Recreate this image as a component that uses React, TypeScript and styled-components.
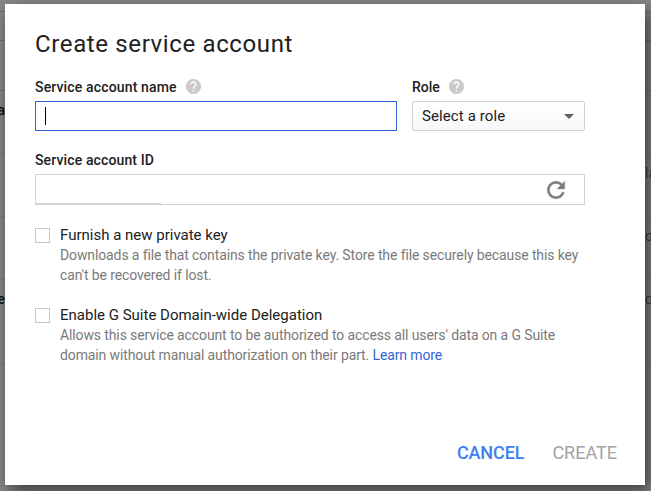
import React from "react";
import styled, { createGlobalStyle } from "styled-components";

const GlobalStyle = createGlobalStyle`
  * { box-sizing: border-box; }
  html, body { margin: 0; height: 100%; overflow: hidden; }
  body { font-family: Roboto, "Liberation Sans", sans-serif; color: #212121; background: #888; }
  h1, p { margin: 0; font-weight: 400; }
`;

const Screen = styled.div`
  position: relative;
  height: 491px;
  overflow: hidden;
`;

const Backdrop = styled.div`
  display: flex;
  flex-direction: column;
  height: 491px;
  background: #888;
`;

const BackRow = styled.div<{ $height: number; $strong?: boolean }>`
  display: flex;
  justify-content: space-between;
  align-items: flex-start;
  flex: none;
  height: ${(p) => p.$height}px;
  padding-top: ${(p) => (p.$height > 40 ? 11 : 0)}px;
  border-bottom: 1px solid ${(p) => (p.$strong ? "#717171" : "#7c7c7c")};
  font-size: 14px;
  line-height: 16px;
`;

const StartCell = styled.span`
  display: flex;
  justify-content: flex-end;
  width: 5px;
  font-weight: 500;
  color: #111;
`;

const EndCell = styled.span`
  width: 6px;
  overflow: hidden;
  white-space: nowrap;
  color: #444;
`;

const Dialog = styled.section`
  position: absolute;
  top: 4px;
  left: 5px;
  width: 640px;
  height: 481px;
  padding: 24px 23px 17px 30px;
  display: flex;
  flex-direction: column;
  background: #fff;
  box-shadow: 4px 6px 16px rgba(0, 0, 0, 0.6);
`;

const Title = styled.h1`
  font-size: 24px;
  line-height: 32px;
  letter-spacing: 0.63px;
`;

const Form = styled.div`
  display: flex;
  flex-direction: column;
  width: 550px;
  padding-top: 17px;
`;

const FieldRow = styled.div`
  display: grid;
  grid-template-columns: 362px 173px;
  column-gap: 15px;
  margin-bottom: 19px;
`;

const Field = styled.div`
  display: flex;
  flex-direction: column;
`;

const Label = styled.label<{ $spacing?: number }>`
  display: flex;
  align-items: center;
  gap: 9px;
  height: 20px;
  margin-bottom: 4px;
  font-size: 14px;
  font-weight: 500;
  letter-spacing: ${(p) => p.$spacing ?? 0}px;

  svg {
    margin-bottom: 2px;
  }
`;

const NameInput = styled.div`
  display: flex;
  align-items: center;
  height: 30px;
  padding-left: 9px;
  border: 1px solid #3367d6;
`;

const Caret = styled.span`
  width: 1px;
  height: 18px;
  background: #000;
`;

const Select = styled.div`
  display: flex;
  align-items: center;
  justify-content: space-between;
  height: 30px;
  padding: 0 10px 0 9px;
  border: 1px solid #d1d1d1;
  border-radius: 2px;
  background: linear-gradient(#fff, #f8f8f8);
  font-size: 15px;
  letter-spacing: 0.1px;
`;

const IdInput = styled.div`
  display: flex;
  align-items: center;
  justify-content: flex-end;
  height: 31px;
  padding-right: 15px;
  border: 1px solid #d1d1d1;
  background: linear-gradient(#d1d1d1, #d1d1d1) 0 100% / 125px 1px no-repeat;
`;

const Option = styled.div`
  display: grid;
  grid-template-columns: 15px 1fr;
  column-gap: 10px;
`;

const Options = styled.div`
  display: flex;
  flex-direction: column;
  gap: 20px;
  padding-top: 20px;
`;

const Checkbox = styled.span`
  width: 15px;
  height: 15px;
  margin-top: 3px;
  border: 1px solid #c6c6c6;
`;

const OptionTitle = styled.p`
  font-size: 15px;
  line-height: 20px;
`;

const OptionText = styled.p`
  font-size: 14px;
  line-height: 20px;
  color: #7a7a7a;
  white-space: nowrap;
  letter-spacing: -0.118px;
`;

const Link = styled.a`
  color: #3367d6;
`;

const Actions = styled.div`
  display: flex;
  justify-content: flex-end;
  gap: 28px;
  margin-top: auto;
  padding-right: 5px;
`;

const ActionButton = styled.button<{ $primary?: boolean }>`
  padding: 0;
  border: 0;
  background: none;
  font: ${(p) => (p.$primary ? 500 : 400)} 18px/30px Roboto, sans-serif;
  letter-spacing: ${(p) => (p.$primary ? -0.1 : 0)}px;
  color: ${(p) => (p.$primary ? "#4080ee" : "#a3a3a3")};
`;

const HelpIcon = () => (
  <svg width="15" height="15" viewBox="2 2 20 20">
    <path
      fill="#cacaca"
      d="M12 2C6.480 2 2 6.480 2 12s4.480 10 10 10 10-4.480 10-10S17.520 2 12 2zm1 17h-2v-2h2v2zm2.070-7.750l-.9.920C13.450 12.900 13 13.500 13 15h-2v-.5c0-1.100.450-2.100 1.170-2.830l1.240-1.260c.370-.360.590-.860.590-1.410 0-1.100-.9-2-2-2s-2 .9-2 2H8c0-2.210 1.790-4 4-4s4 1.790 4 4c0 .880-.360 1.680-.930 2.250z"
    />
  </svg>
);

const ArrowIcon = () => (
  <svg width="10" height="5" viewBox="0 0 10 5">
    <path d="M0 0h10L5 5z" fill="#5f5f5f" />
  </svg>
);

const RefreshIcon = () => (
  <svg width="26" height="26" viewBox="0 0 24 24">
    <path
      fill="#7c7c7c"
      stroke="#7c7c7c"
      strokeWidth="0.4"
      d="M17.650 6.350C16.200 4.900 14.210 4 12 4c-4.420 0-7.990 3.580-7.990 8s3.570 8 7.990 8c3.730 0 6.840-2.550 7.730-6h-2.080c-.820 2.330-3.040 4-5.650 4-3.310 0-6-2.690-6-6s2.690-6 6-6c1.660 0 3.140.690 4.220 1.780L13 11h7V4l-2.350 2.350z"
    />
  </svg>
);

const rows = [
  { height: 12, strong: true, start: "", end: "" },
  { height: 29, strong: true, start: "", end: "" },
  { height: 50, strong: true, start: "", end: "" },
  { height: 63, start: "a", end: "" },
  { height: 63, start: "", end: "la" },
  { height: 63, start: "", end: "oc" },
  { height: 85, start: "e", end: "cT" },
];

export default function App() {
  return (
    <>
      <GlobalStyle />
      <Screen>
        <Backdrop aria-hidden="true">
          {rows.map((row, i) => (
            <BackRow key={i} $height={row.height} $strong={row.strong}>
              <StartCell>{row.start}</StartCell>
              <EndCell>{row.end}</EndCell>
            </BackRow>
          ))}
        </Backdrop>
        <Dialog role="dialog">
          <Title>Create service account</Title>
          <Form>
            <FieldRow>
              <Field>
                <Label $spacing={0.15}>
                  Service account name <HelpIcon />
                </Label>
                <NameInput>
                  <Caret />
                </NameInput>
              </Field>
              <Field>
                <Label>
                  Role <HelpIcon />
                </Label>
                <Select>
                  Select a role <ArrowIcon />
                </Select>
              </Field>
            </FieldRow>
            <Field>
              <Label $spacing={0.13}>Service account ID</Label>
              <IdInput>
                <RefreshIcon />
              </IdInput>
            </Field>
            <Options>
              <Option>
                <Checkbox />
                <div>
                  <OptionTitle>Furnish a new private key</OptionTitle>
                  <OptionText>
                    Downloads a file that contains the private key. Store the file securely because this key
                    <br />
                    can't be recovered if lost.
                  </OptionText>
                </div>
              </Option>
              <Option>
                <Checkbox />
                <div>
                  <OptionTitle>Enable G Suite Domain-wide Delegation</OptionTitle>
                  <OptionText>
                    Allows this service account to be authorized to access all users' data on a G Suite
                    <br />
                    domain without manual authorization on their part. <Link>Learn more</Link>
                  </OptionText>
                </div>
              </Option>
            </Options>
          </Form>
          <Actions>
            <ActionButton $primary>CANCEL</ActionButton>
            <ActionButton>CREATE</ActionButton>
          </Actions>
        </Dialog>
      </Screen>
    </>
  );
}
